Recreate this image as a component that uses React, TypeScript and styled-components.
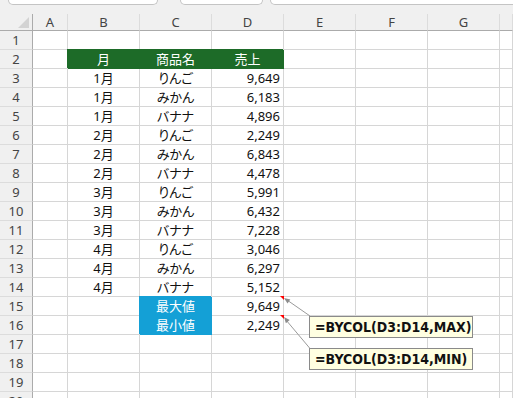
import React from "react";
import styled, { createGlobalStyle, css } from "styled-components";

const GlobalStyle = createGlobalStyle`
  html, body { margin: 0; padding: 0; background: #ffffff; overflow: hidden; }
  * { box-sizing: border-box; }
`;

const GRID = "#d6d6d6";
const HEAD_LINE = "#ababab";
const GREEN = "#1d6b28";
const BLUE = "#14a0d6";

const Page = styled.div`
  position: relative;
  width: 513px;
  height: 398px;
  overflow: hidden;
  background: #ffffff;
`;

const TopStrip = styled.div`
  height: 14px;
  background: #f0f0f0;
  display: flex;
  align-items: flex-start;
  padding-left: 8px;
  overflow: hidden;
`;

const TopBox = styled.div<{ $w?: number; $gap: number }>`
  height: 5px;
  margin-right: ${(p) => p.$gap}px;
  background: #ffffff;
  border: 1px solid #c4c4c4;
  border-top: none;
  border-radius: 0 0 6px 6px;
  ${(p) => (p.$w ? css`width: ${p.$w}px; flex: none;` : css`flex: 1; margin-right: -20px;`)}
`;

const Sheet = styled.div`
  display: grid;
  grid-template-columns: 33px 35px repeat(6, 72px) 1fr;
  grid-template-rows: 17px repeat(20, 19px);
  font-family: "Noto Sans", "Noto Sans CJK JP", sans-serif;
`;

const Corner = styled.div`
  position: relative;
  background: #f0f0f0;
  border-right: 1px solid ${HEAD_LINE};
  border-bottom: 1px solid ${HEAD_LINE};
  &::after {
    content: "";
    position: absolute;
    right: 3px;
    bottom: 2px;
    width: 0;
    height: 0;
    border-left: 11px solid transparent;
    border-bottom: 11px solid #d3d3d3;
  }
`;

const ColHead = styled.div`
  background: #f0f0f0;
  border-right: 1px solid #dcdcdc;
  border-bottom: 1px solid ${HEAD_LINE};
  display: flex;
  align-items: center;
  justify-content: center;
  font-family: "Noto Sans", "Open Sans", sans-serif;
  font-size: 13px;
  color: #444444;
  line-height: 1;
  padding-top: 1px;
`;

const RowHead = styled.div`
  background: #f0f0f0;
  border-right: 1px solid ${HEAD_LINE};
  border-bottom: 1px solid #dcdcdc;
  display: flex;
  align-items: center;
  justify-content: center;
  font-family: "Noto Sans", "Open Sans", sans-serif;
  font-size: 13px;
  color: #444444;
  line-height: 1;
`;

const Cell = styled.div<{ $align?: "left" | "center" | "right"; $fill?: string }>`
  position: relative;
  border-right: 1px solid ${(p) => p.$fill ?? GRID};
  border-bottom: 1px solid ${(p) => p.$fill ?? GRID};
  background: ${(p) => p.$fill ?? "#ffffff"};
  color: ${(p) => (p.$fill ? "#ffffff" : "#111111")};
  box-shadow: ${(p) => (p.$fill ? `-1px -1px 0 0 ${p.$fill}` : "none")};
  display: flex;
  align-items: center;
  justify-content: ${(p) =>
    p.$align === "right" ? "flex-end" : p.$align === "center" ? "center" : "flex-start"};
  padding: 0 3px 0 3px;
  font-size: 13px;
  line-height: 1;
  font-feature-settings: "palt";
  white-space: nowrap;
`;

const CommentMark = styled.span`
  position: absolute;
  top: -1px;
  right: -1px;
  width: 0;
  height: 0;
  border-top: 4px solid #ff0000;
  border-left: 4px solid transparent;
  z-index: 2;
`;

const Callout = styled.div<{ $top: number }>`
  position: absolute;
  left: 309px;
  top: ${(p) => p.$top}px;
  width: 164px;
  height: 22px;
  background: #ffffe1;
  border: 1px solid #8a8a8a;
  display: flex;
  align-items: center;
  padding-left: 5px;
  font-family: "DejaVu Sans Condensed", "Liberation Sans", sans-serif;
  font-stretch: condensed;
  font-weight: bold;
  font-size: 14px;
  color: #111111;
  white-space: nowrap;
  z-index: 3;
`;

const Arrows = styled.svg`
  position: absolute;
  left: 0;
  top: 0;
  pointer-events: none;
  z-index: 4;
`;

type Row = [string, string, string];
const data: Row[] = [
  ["1月", "りんご", "9,649"],
  ["1月", "みかん", "6,183"],
  ["1月", "バナナ", "4,896"],
  ["2月", "りんご", "2,249"],
  ["2月", "みかん", "6,843"],
  ["2月", "バナナ", "4,478"],
  ["3月", "りんご", "5,991"],
  ["3月", "みかん", "6,432"],
  ["3月", "バナナ", "7,228"],
  ["4月", "りんご", "3,046"],
  ["4月", "みかん", "6,297"],
  ["4月", "バナナ", "5,152"],
];

const cols = ["A", "B", "C", "D", "E", "F", "G", ""];

type CellDef = { text?: string; align?: "left" | "center" | "right"; fill?: string; comment?: boolean };

function rowCells(r: number): CellDef[] {
  const blank: CellDef[] = Array.from({ length: 8 }, () => ({}));
  if (r === 2) {
    blank[1] = { text: "月", align: "center", fill: GREEN };
    blank[2] = { text: "商品名", align: "center", fill: GREEN };
    blank[3] = { text: "売上", align: "center", fill: GREEN };
  } else if (r >= 3 && r <= 14) {
    const d = data[r - 3];
    blank[1] = { text: d[0], align: "center" };
    blank[2] = { text: d[1], align: "center" };
    blank[3] = { text: d[2], align: "right" };
  } else if (r === 15) {
    blank[2] = { text: "最大値", align: "center", fill: BLUE };
    blank[3] = { text: "9,649", align: "right", comment: true };
  } else if (r === 16) {
    blank[2] = { text: "最小値", align: "center", fill: BLUE };
    blank[3] = { text: "2,249", align: "right", comment: true };
  }
  return blank;
}

export default function App() {
  const rows = Array.from({ length: 20 }, (_, i) => i + 1);
  return (
    <Page>
      <GlobalStyle />
      <TopStrip>
        <TopBox $w={150} $gap={22} />
        <TopBox $w={83} $gap={7} />
        <TopBox $gap={0} />
      </TopStrip>
      <Sheet>
        <Corner />
        {cols.map((c, i) => (
          <ColHead key={`h${i}`}>{c}</ColHead>
        ))}
        {rows.map((r) => (
          <React.Fragment key={r}>
            <RowHead>{r}</RowHead>
            {rowCells(r).map((c, i) => (
              <Cell key={i} $align={c.align} $fill={c.fill}>
                {c.text}
                {c.comment && <CommentMark />}
              </Cell>
            ))}
          </React.Fragment>
        ))}
      </Sheet>
      <Callout $top={316}>=BYCOL(D3:D14,MAX)</Callout>
      <Callout $top={348}>=BYCOL(D3:D14,MIN)</Callout>
      <Arrows width={513} height={398} viewBox="0 0 513 398">
        <line x1={287} y1={300} x2={310} y2={316} stroke="#9a9a9a" strokeWidth={1} />
        <polygon points="284,298 287.5,303.5 290.3,299.4" fill="#8c8c8c" />
        <line x1={286} y1={320} x2={310} y2={348.5} stroke="#9a9a9a" strokeWidth={1} />
        <polygon points="284,317 285.9,323.2 289.7,320.1" fill="#8c8c8c" />
      </Arrows>
    </Page>
  );
}
